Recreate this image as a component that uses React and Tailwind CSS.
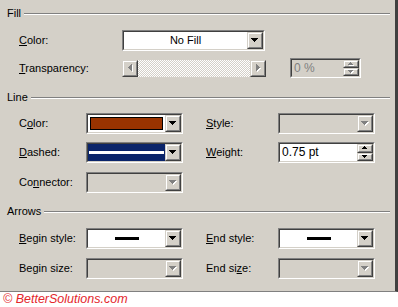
import React from 'react';

// tiny pixel arrows, like the classic win32 glyphs
const Arrow = ({ dir = 'down', size = 4, disabled }) => {
  const w = size * 2 - 1;
  const rects = [];
  for (let i = 0; i < size; i++) {
    const len = w - i * 2;
    if (dir === 'down') rects.push([i, i, len, 1]);
    if (dir === 'up') rects.push([i, size - 1 - i, len, 1]);
    if (dir === 'right') rects.push([i, i, 1, len]);
    if (dir === 'left') rects.push([size - 1 - i, i, 1, len]);
  }
  const horiz = dir === 'down' || dir === 'up';
  const vw = (horiz ? w : size) + 1;
  const vh = (horiz ? size : w) + 1;
  return (
    <svg width={vw} height={vh} viewBox={`0 0 ${vw} ${vh}`} shapeRendering="crispEdges">
      {disabled && rects.map(([x, y, a, b], k) => (
        <rect key={'s' + k} x={x + 1} y={y + 1} width={a} height={b} fill="#fff" />
      ))}
      {rects.map(([x, y, a, b], k) => (
        <rect key={k} x={x} y={y} width={a} height={b} fill={disabled ? '#808080' : '#000'} />
      ))}
    </svg>
  );
};

const Raised = ({ className = '', children }) => (
  <div className={`border border-t-[#d4d0c8] border-l-[#d4d0c8] border-b-[#404040] border-r-[#404040] ${className}`}>
    <div className="h-full flex items-center justify-center bg-[#d4d0c8] border border-t-white border-l-white border-b-[#808080] border-r-[#808080]">
      {children}
    </div>
  </div>
);

const Sunken = ({ className = '', bg = 'bg-white', children }) => (
  <div className={`border border-t-[#808080] border-l-[#808080] border-b-white border-r-white ${className}`}>
    <div className={`flex h-full border border-t-[#404040] border-l-[#404040] border-b-[#d4d0c8] border-r-[#d4d0c8] ${bg}`}>
      {children}
    </div>
  </div>
);

const Combo = ({ className = '', disabled, children }) => (
  <Sunken className={className} bg={disabled ? 'bg-[#d4d0c8]' : 'bg-white'}>
    <div className="flex-1 flex">{children}</div>
    <Raised className="w-[16px]">
      <Arrow dir="down" disabled={disabled} />
    </Raised>
  </Sunken>
);

const Spinner = ({ className = '', value, disabled }) => (
  <Sunken className={className} bg={disabled ? 'bg-[#d4d0c8]' : 'bg-white'}>
    <div className={`flex-1 flex items-center pl-[2px] text-[12px] ${disabled ? 'text-[#808080]' : 'text-black'}`}>{value}</div>
    <div className="flex flex-col w-[16px]">
      <Raised className="flex-1"><Arrow dir="up" size={3} disabled={disabled} /></Raised>
      <Raised className="flex-1"><Arrow dir="down" size={3} disabled={disabled} /></Raised>
    </div>
  </Sunken>
);

const Header = ({ title, className = '' }) => (
  <div className={`flex items-center h-[13px] pl-[7px] pr-[5px] ${className}`}>
    <span>{title}</span>
    <div className="flex-1 ml-[3px] border-t border-t-[#808080] border-b border-b-white" />
  </div>
);

const App = () => {
  return (
    <div className="w-[398px] h-[307px] bg-white font-['Liberation_Sans',Arial,sans-serif] text-[11px] leading-[13px] text-black overflow-hidden">
      <div className="h-[292px] bg-[#d4d0c8] border-r-[3px] border-r-[#404040] border-b border-b-[#808080] flex flex-col">

        {/* Fill */}
        <Header title="Fill" className="mt-[7px]" />
        <div className="flex items-center mt-[10px] h-[21px] pl-[19px]">
          <span className="w-[103px]"><u>C</u>olor:</span>
          <Combo className="w-[143px] h-[21px]">
            <div className="flex-1 flex items-center justify-center">No Fill</div>
          </Combo>
        </div>
        <div className="flex items-center mt-[7px] h-[20px] pl-[19px]">
          <span className="w-[103px]"><u>T</u>ransparency:</span>
          <div className="flex w-[144px] h-[17px]">
            <Raised className="w-[16px]"><Arrow dir="left" disabled /></Raised>
            <div className="flex-1 bg-[image:repeating-conic-gradient(#d4d0c8_0_25%,#fff_0_50%)] bg-[length:2px_2px]" />
            <Raised className="w-[16px]"><Arrow dir="right" disabled /></Raised>
          </div>
          <Spinner className="ml-[24px] w-[71px] h-[20px]" value="0 %" disabled />
        </div>

        {/* Line */}
        <Header title="Line" className="mt-[13px]" />
        <div className="flex items-center mt-[9px] h-[21px] pl-[19px]">
          <span className="w-[67px]">C<u>o</u>lor:</span>
          <Combo className="w-[97px] h-[21px]">
            <div className="flex-1 p-[2px]">
              <div className="h-full bg-[#993300] border border-black" />
            </div>
          </Combo>
          <span className="ml-[23px] w-[72px]"><u>S</u>tyle:</span>
          <Combo className="w-[97px] h-[21px]" disabled />
        </div>
        <div className="flex items-center mt-[8px] h-[21px] pl-[19px]">
          <span className="w-[67px]"><u>D</u>ashed:</span>
          <Combo className="w-[97px] h-[21px]">
            <div className="flex-1 flex items-center bg-[#0a246a] px-[1px]">
              <div className="w-full h-[3px] bg-white" />
            </div>
          </Combo>
          <span className="ml-[23px] w-[72px]"><u>W</u>eight:</span>
          <Spinner className="w-[97px] h-[21px]" value="0.75 pt" />
        </div>
        <div className="flex items-center mt-[9px] h-[21px] pl-[19px]">
          <span className="w-[67px]">Co<u>n</u>nector:</span>
          <Combo className="w-[97px] h-[21px]" disabled />
        </div>

        {/* Arrows */}
        <Header title="Arrows" className="mt-[12px]" />
        <div className="flex items-center mt-[10px] h-[21px] pl-[19px]">
          <span className="w-[67px]"><u>B</u>egin style:</span>
          <Combo className="w-[97px] h-[21px]">
            <div className="flex-1 flex items-center justify-center">
              <div className="w-[24px] h-[3px] bg-black" />
            </div>
          </Combo>
          <span className="ml-[23px] w-[72px]"><u>E</u>nd style:</span>
          <Combo className="w-[97px] h-[21px]">
            <div className="flex-1 flex items-center justify-center">
              <div className="w-[24px] h-[3px] bg-black" />
            </div>
          </Combo>
        </div>
        <div className="flex items-center mt-[9px] h-[21px] pl-[19px]">
          <span className="w-[67px]">Begin size:</span>
          <Combo className="w-[97px] h-[21px]" disabled />
          <span className="ml-[23px] w-[72px]">End si<u>z</u>e:</span>
          <Combo className="w-[97px] h-[21px]" disabled />
        </div>
      </div>

      <div className="h-[15px] pl-[3px] text-[12.5px] leading-[15px] italic text-[#e4262b]">
        © BetterSolutions.com
      </div>
    </div>
  );
};

export default App;
